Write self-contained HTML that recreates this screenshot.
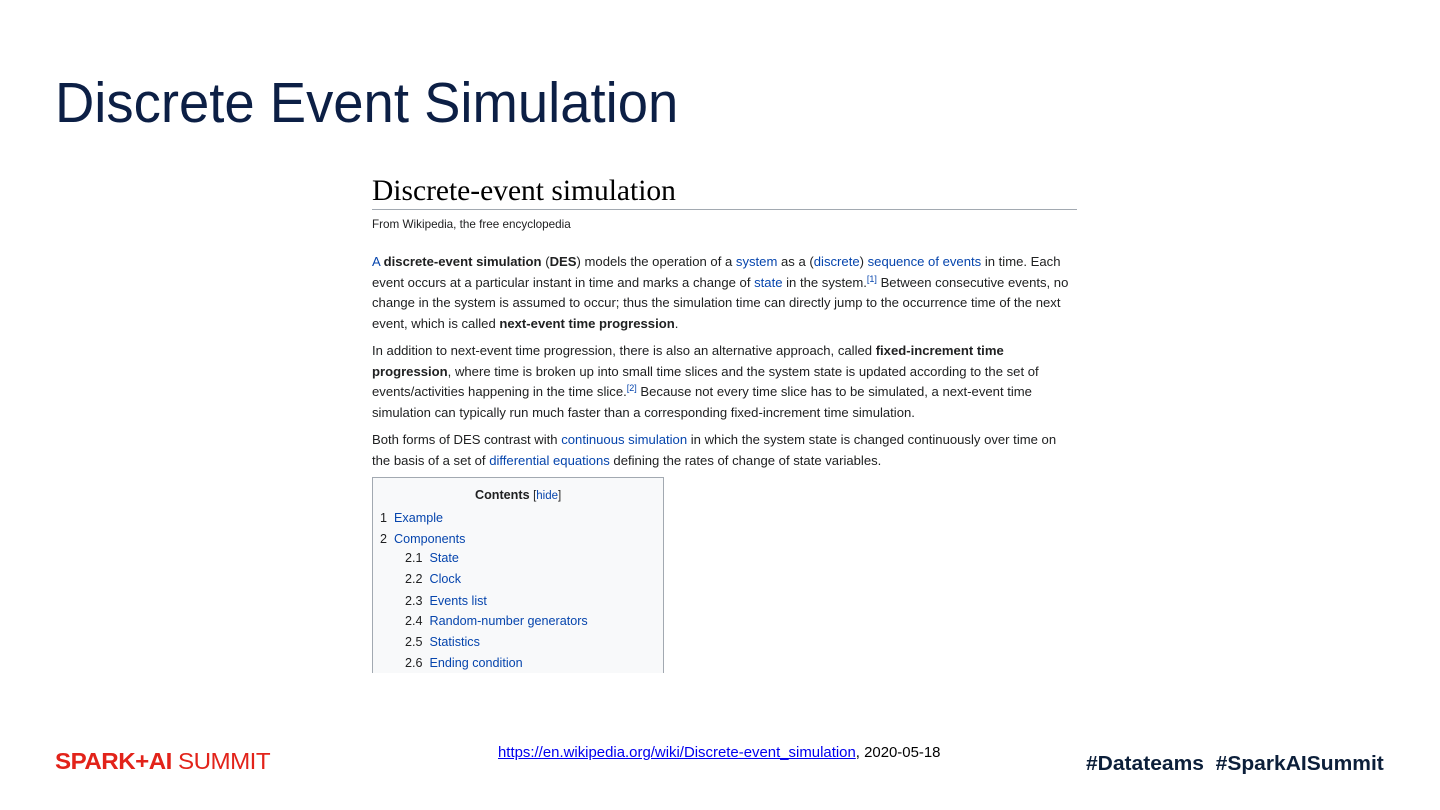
<!DOCTYPE html>
<html><head><meta charset="utf-8"><style>
body{margin:0;width:1440px;height:810px;background:#fff;position:relative;overflow:hidden;font-family:"Liberation Sans",Arial,sans-serif}
.t{position:absolute;left:55px;top:70px;font-size:57px;color:#0c1f45;white-space:nowrap;transform-origin:left top;transform:scaleX(0.955)}
.l{position:absolute;left:372px;white-space:nowrap;font-size:13.1px;color:#202122}
a{color:#0645ad;text-decoration:none}
sup{font-size:9px;vertical-align:5px;line-height:0}
h1{position:absolute;left:372px;top:175px;margin:0;font-family:"Liberation Serif",serif;font-weight:normal;font-size:29.5px;color:#000}
.hr{position:absolute;left:372px;top:209px;width:705px;height:1px;background:#a2a9b1}
.toc{position:absolute;left:372px;top:477px;width:290px;height:200px;background:#f8f9fa;border:1px solid #a2a9b1;border-bottom:none}
.toc div{position:absolute;white-space:nowrap;font-size:12.6px;color:#202122}
</style></head><body>
<div class="t">Discrete Event Simulation</div>
<h1>Discrete-event simulation</h1>
<div class="hr"></div>
<div class="l" style="top:218px;font-size:11.7px">From Wikipedia, the free encyclopedia</div>
<div class="l" style="top:254px"><a>A</a> <b>discrete-event simulation</b> (<b>DES</b>) models the operation of a <a>system</a> as a (<a>discrete</a>) <a>sequence of events</a> in time. Each</div>
<div class="l" style="top:275px">event occurs at a particular instant in time and marks a change of <a>state</a> in the system.<sup><a>[1]</a></sup> Between consecutive events, no</div>
<div class="l" style="top:295px">change in the system is assumed to occur; thus the simulation time can directly jump to the occurrence time of the next</div>
<div class="l" style="top:316px">event, which is called <b>next-event time progression</b>.</div>
<div class="l" style="top:343px">In addition to next-event time progression, there is also an alternative approach, called <b>fixed-increment time</b></div>
<div class="l" style="top:364px"><b>progression</b>, where time is broken up into small time slices and the system state is updated according to the set of</div>
<div class="l" style="top:384px">events/activities happening in the time slice.<sup><a>[2]</a></sup> Because not every time slice has to be simulated, a next-event time</div>
<div class="l" style="top:405px">simulation can typically run much faster than a corresponding fixed-increment time simulation.</div>
<div class="l" style="top:432px">Both forms of DES contrast with <a>continuous simulation</a> in which the system state is changed continuously over time on</div>
<div class="l" style="top:453px">the basis of a set of <a>differential equations</a> defining the rates of change of state variables.</div>
<div class="toc">
<div style="left:102px;top:10px"><b>Contents</b> <span style="font-size:11.5px">[<a>hide</a>]</span></div>
<div style="left:7px;top:33px">1&nbsp; <a>Example</a></div>
<div style="left:7px;top:54px">2&nbsp; <a>Components</a></div>
<div style="left:32px;top:73px">2.1&nbsp; <a>State</a></div>
<div style="left:32px;top:94px">2.2&nbsp; <a>Clock</a></div>
<div style="left:32px;top:116px">2.3&nbsp; <a>Events list</a></div>
<div style="left:32px;top:136px">2.4&nbsp; <a>Random-number generators</a></div>
<div style="left:32px;top:157px">2.5&nbsp; <a>Statistics</a></div>
<div style="left:32px;top:178px">2.6&nbsp; <a>Ending condition</a></div>
</div>
<div style="position:absolute;left:0;top:673px;width:1440px;height:60px;background:#fff"></div>
<div style="position:absolute;left:55px;top:748px;font-size:23px;color:#e2231a;white-space:nowrap;letter-spacing:-0.5px;transform-origin:left top;transform:scaleX(1.05)"><b>SPARK+AI</b> SUMMIT</div>
<div style="position:absolute;left:498px;top:745px;font-size:14.5px;white-space:nowrap;color:#000;transform-origin:left top;transform:scaleX(1.03)"><span style="color:#0000ee;text-decoration:underline">https://en.wikipedia.org/wiki/Discrete-event_simulation</span>, 2020-05-18</div>
<div style="position:absolute;left:1086px;top:752px;font-size:20.5px;font-weight:bold;color:#0c1f3a;white-space:nowrap;transform-origin:left top;transform:scaleX(1.025)">#Datateams&nbsp; #SparkAISummit</div>
</body></html>
